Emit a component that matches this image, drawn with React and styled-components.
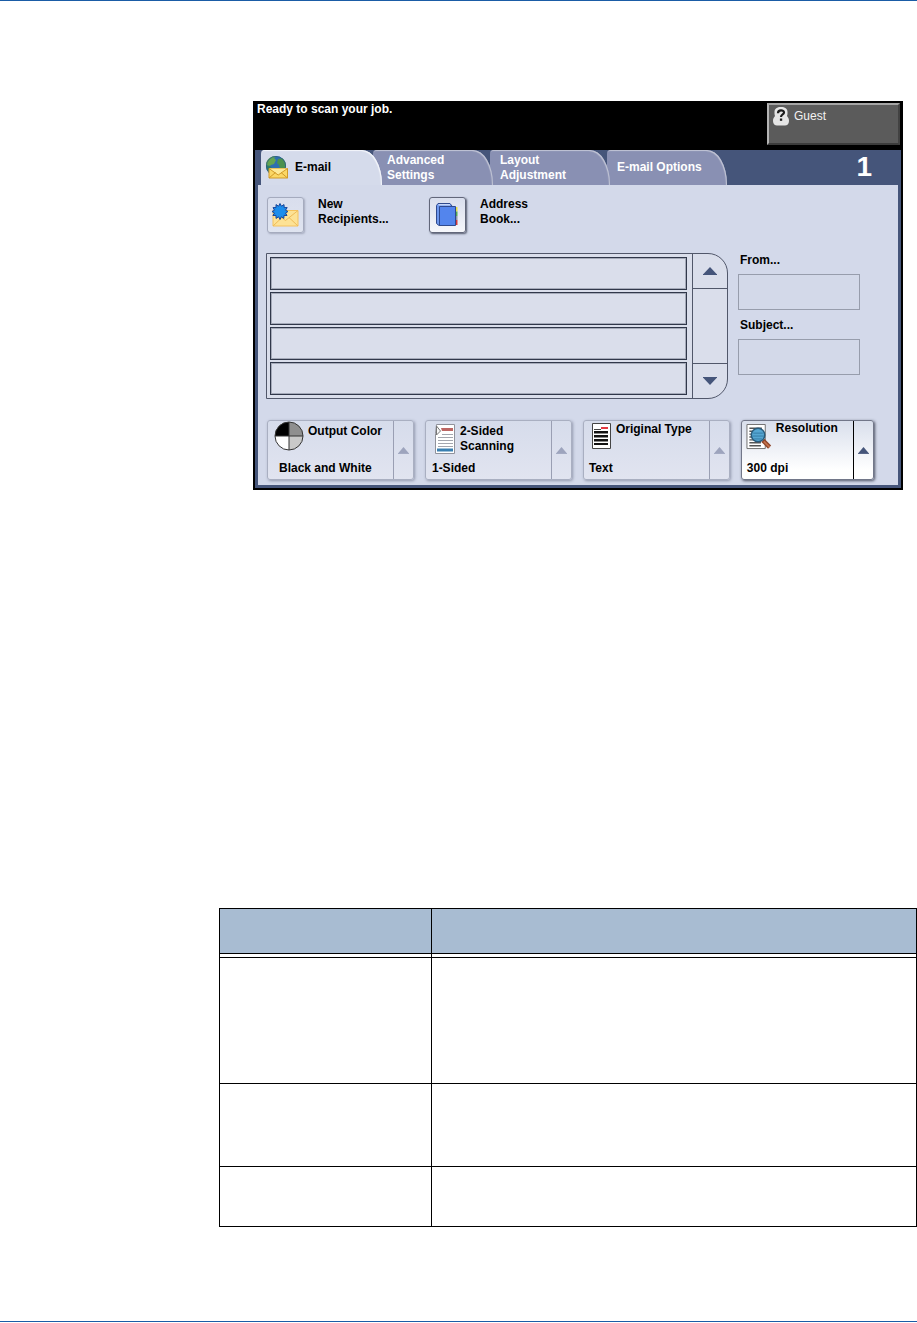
import React, { useState } from 'react';
import styled, { createGlobalStyle } from 'styled-components';

const GlobalStyle = createGlobalStyle`
  * {
    box-sizing: border-box;
  }

  body {
    margin: 0;
    background: #ffffff;
    color: #000000;
    font: bold 12px/15px "Liberation Sans", Arial, sans-serif;
  }

  button,
  input {
    font: inherit;
    color: inherit;
  }

  svg {
    display: block;
    flex: none;
  }
`;

const Page = styled.div`
  display: flex;
  flex-direction: column;
  min-height: 100vh;
  padding-bottom: 1px;
  border-top: 1px solid #1a5ca6;
`;

const Footer = styled.footer`
  margin-top: auto;
  border-top: 1px solid #1a5ca6;
`;

const Screen = styled.main`
  margin: 100px 14px 0 253px;
  border: 2px solid #000000;
  background: #45557a;
`;

const StatusBar = styled.header`
  display: flex;
  justify-content: space-between;
  height: 47px;
  padding: 0 1px 5px 2px;
  background: #000000;
  color: #ffffff;
`;

const Status = styled.p`
  margin: 0;
  line-height: 12px;
`;

const GuestButton = styled.button`
  display: flex;
  align-items: flex-start;
  gap: 5px;
  width: 133px;
  padding: 2px 4px;
  border: 2px solid;
  border-color: #a5a5a5 #424242 #3c3c3c #b4b4b4;
  background: #5b5b5b;
  color: #f2f2f2;
  font-weight: normal;
  line-height: 19px;
`;

const TabBar = styled.nav`
  display: flex;
  height: 35px;
  padding-left: 6px;
`;

const Tab = styled.button`
  display: flex;
  align-items: center;
  gap: 6px;
  flex: 0 0 ${(props) => (props.$active ? '121px' : '120px')};
  margin: 0 ${(props) => (props.$active ? '-6px' : '0')} 0 ${(props) => (props.$active ? '0' : '-3px')};
  padding: 0 0 0 ${(props) => (props.$active ? '4px' : '10px')};
  border: 0;
  border-top-left-radius: 4px;
  border-top-right-radius: 20px 34px;
  background: ${(props) => (props.$active ? '#d5dbeb' : '#8990b3')};
  box-shadow: inset -1px 1px 1px ${(props) => (props.$active ? '#f4f6fb' : '#c3c6d6')};
  color: ${(props) => (props.$active ? '#000000' : '#ffffff')};
  text-align: left;
  white-space: pre-line;
  position: relative;
  z-index: ${(props) => props.$level};

  &:nth-child(2) {
    padding-left: 14px;
  }
`;

const JobCount = styled.span`
  margin-left: auto;
  padding-right: 29px;
  color: #ffffff;
  font-size: 28px;
  line-height: 33px;
`;

const Panel = styled.div`
  margin: 0 3px 3px;
  padding: 12px 24px 5px 8px;
  background: #d3d9ea;
`;

const Actions = styled.div`
  display: flex;
  margin-bottom: 20px;
  padding-left: 1px;
`;

const Action = styled.button`
  display: flex;
  gap: 14px;
  width: 162px;
  padding: 0;
  border: 0;
  background: none;
  text-align: left;
  white-space: pre-line;
`;

const ActionIcon = styled.span`
  display: grid;
  place-items: center;
  width: 37px;
  height: 36px;
  border: 1px solid ${(props) => (props.$ready ? '#62677a' : '#a5abbe')};
  border-radius: 3px;
  background: linear-gradient(#d9deed, ${(props) => (props.$ready ? '#f6f7fb' : '#dfe4f0')});
  box-shadow: 1px 1px 2px ${(props) => (props.$ready ? '#555b6e' : '#a4aabd')};
`;

const Workspace = styled.div`
  display: flex;
  gap: 10px;
  margin-bottom: 21px;
  padding-right: 14px;
`;

const RecipientBox = styled.div`
  display: flex;
  flex: 1;
  height: 146px;
  border: 1px solid #51576a;
  border-radius: 0 20px 20px 0;
  background: #dadeeb;
  overflow: hidden;
`;

const Recipients = styled.ul`
  display: flex;
  flex: 1;
  flex-direction: column;
  gap: 2px;
  margin: 0;
  padding: 3px 5px 3px 3px;
  list-style: none;
`;

const Recipient = styled.li`
  flex: 1;
  border: 1px solid #30374a;
  box-shadow: inset 0 0 0 1px #a5aab9;
`;

const Scroller = styled.div`
  display: flex;
  flex-direction: column;
  justify-content: space-between;
  width: 35px;
  border-left: 1px solid #51576a;
`;

const ScrollButton = styled.button`
  display: grid;
  place-items: center;
  height: 35px;
  padding: 0;
  border: 0;
  border-${(props) => props.$edge}: 1px solid #51576a;
  background: none;
  color: #45557a;
`;

const Fields = styled.div`
  display: flex;
  flex-direction: column;
  width: 122px;
`;

const FieldLabel = styled.label`
  height: 21px;
  padding-left: 2px;
`;

const FieldInput = styled.input`
  width: 100%;
  height: 36px;
  margin-bottom: 8px;
  padding: 0 6px;
  border: 1px solid #979dac;
  background: #d3d9e9;
`;

const Cards = styled.div`
  display: flex;
  gap: 11px;
  padding-left: 1px;
`;

const Card = styled.button`
  display: flex;
  flex: ${(props) => (props.$ready ? 133 : 147)} 1 0;
  height: 60px;
  padding: 0;
  border: 1px solid ${(props) => (props.$ready ? '#727789' : '#a9afc1')};
  border-radius: 3px;
  background: linear-gradient(
    ${(props) => (props.$ready ? '#d9dfec, #ffffff 85%' : '#d6dceb, #e1e4f0')}
  );
  box-shadow: 1px 1px 3px ${(props) => (props.$ready ? '#4d5263' : '#9298ad')};
  text-align: left;
`;

const CardBody = styled.span`
  display: flex;
  flex: 1;
  flex-direction: column;
  justify-content: space-between;
  height: 100%;
  padding: 0 0 3px 4px;
`;

const CardHead = styled.span`
  display: flex;
  gap: 4px;
  padding-left: ${(props) => props.$indent}px;
  white-space: pre-line;
`;

const CardIcon = styled.span`
  padding-top: ${(props) => props.$top}px;
`;

const CardTitle = styled.span`
  padding-top: ${(props) => props.$top}px;
`;

const CardValue = styled.span`
  padding-left: ${(props) => props.$indent}px;
`;

const CardArrow = styled.span`
  display: grid;
  place-items: center;
  width: 20px;
  height: 100%;
  border-left: 1px solid ${(props) => (props.$ready ? '#000000' : '#9a9fb3')};
  color: ${(props) => (props.$ready ? '#45557a' : '#9da4bd')};
`;

const Table = styled.table`
  width: calc(100% - 219px);
  margin: 418px 0 94px 219px;
  border-top: 1px solid #000000;
  border-left: 1px solid #000000;
  border-spacing: 0;
  table-layout: fixed;

  th,
  td {
    padding: 0;
    border-right: 1px solid #000000;
    border-bottom: 1px solid #000000;
  }

  th {
    height: 49px;
    background: linear-gradient(
      #a8bcd2 calc(100% - 4px),
      #000000 calc(100% - 4px) calc(100% - 3px),
      #ffffff calc(100% - 3px)
    );
  }

  th:first-child {
    width: 212px;
  }
`;

const TableRow = styled.tr`
  height: ${(props) => props.$height}px;
`;

const Arrow = ({ down, small }) => (
  <svg width={small ? 11 : 14} height={small ? 7 : 8} viewBox="0 0 14 8" preserveAspectRatio="none">
    <path d={down ? 'M0 0.5H14L7 8Z' : 'M7 0L14 7.5H0Z'} fill="currentColor" />
    <path d={down ? 'M0 0.5H14' : 'M0 7.5H14'} stroke="currentColor" />
  </svg>
);

const GuestIcon = () => (
  <svg width="16" height="19" viewBox="0 0 16 19">
    <path d="M8 0C4 0 1.500 1.500 1.500 5c0 2 0 2.500.5 4C.7 10.500 0 12 0 14c0 3 2 4.500 4 4.500h8c2 0 4-1.500 4-4.500 0-2-.7-3.500-2-5 .5-1.500.5-2 .5-4C14.500 1.500 12 0 8 0Z" fill="#e6e6e6" />
    <path d="M5 6.200c0-3.700 6-3.700 6-.7 0 2-3 1.800-3 4.500" fill="none" stroke="#1c1c1c" strokeWidth="2.200" />
    <rect x="6.900" y="11.500" width="2.300" height="2.300" fill="#1c1c1c" />
  </svg>
);

const GlobeIcon = () => (
  <svg width="24" height="23" viewBox="0 0 24 23">
    <circle cx="11" cy="10" r="10" fill="#2e6fb0" />
    <path d="M11 0C5 0 1 4 1 9c2 2 4 1 5 0l3-1 2-4-2-2 3-2Z" fill="#64a552" />
    <path d="M13 3l4-1c3 2 4 5 4 9l-3 3-3-1-1-4-2-2Z" fill="#4a9150" />
    <path d="M1 9c0 4 2 7 5 9l2-5-3-3Z" fill="#2c7c68" />
    <circle cx="11" cy="10" r="9.600" fill="none" stroke="#2b5d86" strokeWidth="0.800" />
    <path d="M4 12.500H22.500V22H4Z" fill="#fbd765" stroke="#d19a28" />
    <path d="M4 22l6.500-5.500M22.500 22L16 16.500M4 12.500l9.200 6.500 9.300-6.500" fill="#fde998" stroke="#d19a28" />
  </svg>
);

const NewRecipientIcon = () => (
  <svg width="27" height="24" viewBox="0 0 27 24">
    <path d="M1 7.500H26V23H1Z" fill="#fde295" stroke="#f5c25c" />
    <path d="M1 23l9-8.500M26 23l-9-8.500M1 7.500l12.500 10L26 7.500" fill="none" stroke="#efbb58" />
    <path
      d="M8 0.500L9.500 3.200L12 1.600L12.200 4.600L15.200 4.600L13.500 7.200L16 8.500L13.500 10L15 12.500L12 12.400L11.800 15.400L9.300 13.800L8 16.500L6.600 13.800L4 15.400L4 12.400L0.900 12.500L2.500 10L0 8.500L2.500 7.200L1 4.600L4 4.600L4 1.600L6.600 3.200Z"
      fill="#1c8dec"
      stroke="#17459a"
    />
  </svg>
);

const BookIcon = () => (
  <svg width="23" height="24" viewBox="0 0 23 24">
    <path d="M19 4h2.500v4.500H19Z" fill="#e4dc45" />
    <path d="M19 8.500h2.500V13H19Z" fill="#52a653" />
    <path d="M19 13h2.500v4H19Z" fill="#8d94a8" />
    <path d="M19 17h2.500v5H19Z" fill="#d03a3a" />
    <path d="M.5 2.500L2 .5H14L16 3V22.500H3L.5 20.500Z" fill="#6d97ee" stroke="#2f4a8e" />
    <path d="M2.500 1.800H14" stroke="#eef2fb" />
    <path d="M3.500 3.500H19.500V22.500H3.500Z" fill="#5385ed" stroke="#2f4a8e" />
  </svg>
);

const ColorIcon = () => (
  <svg width="30" height="30" viewBox="0 0 30 30">
    <circle cx="15" cy="15" r="14" fill="#ffffff" />
    <path d="M15 15V1A14 14 0 0 0 1 15Z" fill="#000000" />
    <path d="M15 15V1A14 14 0 0 1 29 15Z" fill="#8f8f8f" />
    <path d="M15 15V29A14 14 0 0 0 29 15Z" fill="#c9c9c9" />
    <path d="M15 1V29M1 15H29" stroke="#333333" />
    <circle cx="15" cy="15" r="14" fill="none" stroke="#333333" />
  </svg>
);

const SidesIcon = () => (
  <svg width="22" height="30" viewBox="0 0 22 30">
    <path d="M2.500 .5H20.500V29.500H1.500V9.500Z" fill="#ffffff" stroke="#90929b" />
    <path d="M7 4h12v3H8Z" fill="#bd6663" />
    <path d="M2.500 2v9l4-4Z" fill="#f7f7f7" stroke="#777777" />
    <path d="M8 10.500H19M4 13.500H19M4 16.500H19M4 19.500H19M4 22.500H19" stroke="#a3a6ae" />
    <path d="M3 24.500h16v3H3Z" fill="#397fb1" />
  </svg>
);

const TextPageIcon = () => (
  <svg width="20" height="26" viewBox="0 0 20 26">
    <path d="M.5 .5H18.500V25.500H.5Z" fill="#ffffff" stroke="#444444" />
    <path d="M2 6.500H9" stroke="#444444" />
    <path d="M9 5H16" stroke="#e33a42" strokeWidth="2" />
    <path d="M2 9H16M2 13H16M2 17H16M2 21H16" stroke="#111111" strokeWidth="2" />
    <path d="M2 10.500H16M2 14.500H16M2 18.500H16" stroke="#8a8a8a" />
  </svg>
);

const MagnifierIcon = () => (
  <svg width="26" height="26" viewBox="0 0 26 27">
    <path d="M.5 .5H19.500V25.500H.5Z" fill="#ffffff" stroke="#6c6c6c" />
    <path d="M3 4.500H16M3 7.500H7M3 10.500H6M3 13.500H6M3 16.500H8M3 19.500H15M3 22.500H15" stroke="#555555" strokeWidth="1.500" />
    <path d="M17 17l7 7" stroke="#8b4328" strokeWidth="4.500" />
    <path d="M18 18l6 6" stroke="#c2704a" strokeWidth="2" />
    <circle cx="12" cy="11.500" r="7" fill="#55a6d2" stroke="#285b7c" strokeWidth="1.500" />
    <path d="M7 9.500H17M6 12.500H18M8 15.500H16" stroke="#347ba5" />
  </svg>
);

const tabs = ['E-mail', 'Advanced\nSettings', 'Layout\nAdjustment', 'E-mail Options'];

const options = [
  {
    title: 'Output Color',
    value: 'Black and White',
    icon: <ColorIcon />,
    iconTop: 0,
    titleTop: 3,
    headIndent: 2,
    valueIndent: 7,
  },
  {
    title: '2-Sided\nScanning',
    value: '1-Sided',
    icon: <SidesIcon />,
    iconTop: 3,
    titleTop: 3,
    headIndent: 4,
    valueIndent: 2,
  },
  {
    title: 'Original Type',
    value: 'Text',
    icon: <TextPageIcon />,
    iconTop: 2,
    titleTop: 1,
    headIndent: 4,
    valueIndent: 1,
  },
  {
    title: 'Resolution',
    value: '300 dpi',
    icon: <MagnifierIcon />,
    iconTop: 3,
    titleTop: 0,
    headIndent: 0,
    valueIndent: 1,
    ready: true,
  },
];

const rowHeights = [126, 83, 60];

const App = () => {
  const [activeTab, setActiveTab] = useState(0);

  return (
    <Page>
      <GlobalStyle />
      <Screen>
        <StatusBar>
          <Status>Ready to scan your job.</Status>
          <GuestButton>
            <GuestIcon />
            Guest
          </GuestButton>
        </StatusBar>
        <TabBar>
          {tabs.map((tab, index) => (
            <Tab
              key={tab}
              $active={index === activeTab}
              $level={index === activeTab ? 9 : tabs.length - index}
              onClick={() => setActiveTab(index)}
            >
              {index === 0 && <GlobeIcon />}
              {tab}
            </Tab>
          ))}
          <JobCount>1</JobCount>
        </TabBar>
        <Panel>
          <Actions>
            <Action>
              <ActionIcon>
                <NewRecipientIcon />
              </ActionIcon>
              {'New\nRecipients...'}
            </Action>
            <Action>
              <ActionIcon $ready>
                <BookIcon />
              </ActionIcon>
              {'Address\nBook...'}
            </Action>
          </Actions>
          <Workspace>
            <RecipientBox>
              <Recipients>
                <Recipient />
                <Recipient />
                <Recipient />
                <Recipient />
              </Recipients>
              <Scroller>
                <ScrollButton $edge="bottom" aria-label="Scroll up">
                  <Arrow />
                </ScrollButton>
                <ScrollButton $edge="top" aria-label="Scroll down">
                  <Arrow down />
                </ScrollButton>
              </Scroller>
            </RecipientBox>
            <Fields>
              <FieldLabel htmlFor="from">From...</FieldLabel>
              <FieldInput id="from" type="text" />
              <FieldLabel htmlFor="subject">Subject...</FieldLabel>
              <FieldInput id="subject" type="text" />
            </Fields>
          </Workspace>
          <Cards>
            {options.map((option) => (
              <Card key={option.title} $ready={option.ready}>
                <CardBody>
                  <CardHead $indent={option.headIndent}>
                    <CardIcon $top={option.iconTop}>{option.icon}</CardIcon>
                    <CardTitle $top={option.titleTop}>{option.title}</CardTitle>
                  </CardHead>
                  <CardValue $indent={option.valueIndent}>{option.value}</CardValue>
                </CardBody>
                <CardArrow $ready={option.ready}>
                  <Arrow small />
                </CardArrow>
              </Card>
            ))}
          </Cards>
        </Panel>
      </Screen>
      <Table>
        <thead>
          <tr>
            <th scope="col" />
            <th scope="col" />
          </tr>
        </thead>
        <tbody>
          {rowHeights.map((height) => (
            <TableRow key={height} $height={height}>
              <td />
              <td />
            </TableRow>
          ))}
        </tbody>
      </Table>
      <Footer />
    </Page>
  );
};

export default App;
